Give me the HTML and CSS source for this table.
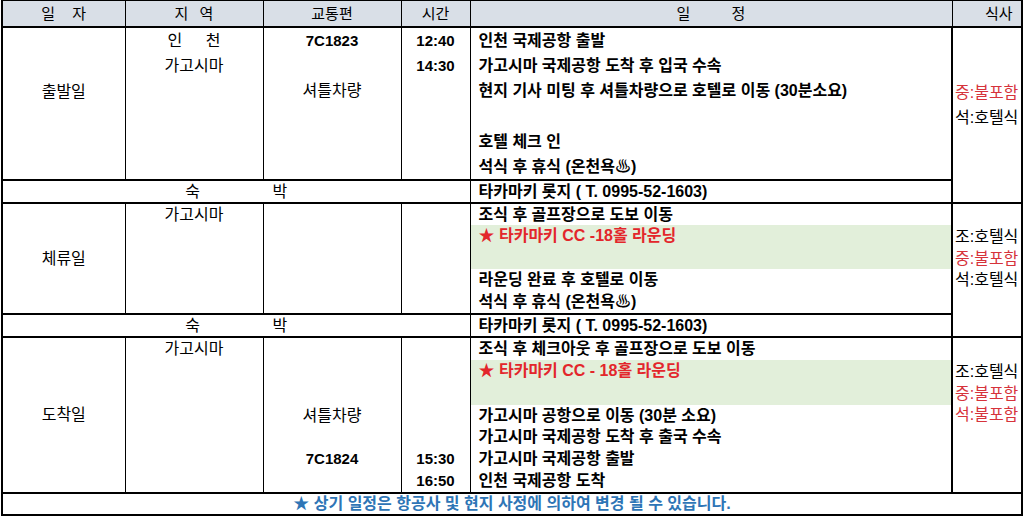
FILE: index.html
```html
<!DOCTYPE html>
<html lang="ko">
<head>
<meta charset="utf-8">
<title>일정표</title>
<link rel="stylesheet" href="styles.css">
</head>
<body>
<table class="plan">
  <colgroup>
    <col class="c-day">
    <col class="c-area">
    <col class="c-trans">
    <col class="c-time">
    <col class="c-sched">
    <col class="c-meal">
  </colgroup>
  <thead>
    <tr class="head">
      <th><span class="sp-day">일 자</span></th>
      <th><span class="sp-area">지 역</span></th>
      <th>교통편</th>
      <th>시간</th>
      <th><span class="sp-sched">일 정</span></th>
      <th class="head-meal">식사</th>
    </tr>
  </thead>
  <tbody>
    <!-- 출발일 -->
    <tr class="h26">
      <td rowspan="6" class="day day-first">출발일</td>
      <td class="area"><span class="sp-city">인 천</span></td>
      <td class="num">7C1823</td>
      <td class="num">12:40</td>
      <td class="sched">인천 국제공항 출발</td>
      <td rowspan="7" class="meal meal-first">
        <div class="meal-line red">중:불포함</div>
        <div class="meal-line">석:호텔식</div>
      </td>
    </tr>
    <tr class="h25">
      <td class="area">가고시마</td>
      <td></td>
      <td class="num">14:30</td>
      <td class="sched">가고시마 국제공항 도착 후 입국 수속</td>
    </tr>
    <tr class="h25">
      <td></td>
      <td class="area">셔틀차량</td>
      <td></td>
      <td class="sched">현지 기사 미팅 후 셔틀차량으로 호텔로 이동 (30분소요)</td>
    </tr>
    <tr class="h26">
      <td></td><td></td><td></td><td class="sched"></td>
    </tr>
    <tr class="h26">
      <td></td><td></td><td></td>
      <td class="sched">호텔 체크 인</td>
    </tr>
    <tr class="h25">
      <td></td><td></td><td></td>
      <td class="sched">석식 후 휴식 (온천욕♨)</td>
    </tr>
    <tr class="stay">
      <td colspan="4" class="stay-label"><span class="sp-stay">숙 박</span></td>
      <td class="sched">타카마키 롯지 ( T. 0995-52-1603)</td>
    </tr>

    <!-- 체류일 -->
    <tr class="h22">
      <td rowspan="4" class="day">체류일</td>
      <td class="area">가고시마</td>
      <td></td><td></td>
      <td class="sched">조식 후 골프장으로 도보 이동</td>
      <td rowspan="5" class="meal meal-mid">
        <div class="meal-line">조:호텔식</div>
        <div class="meal-line red">중:불포함</div>
        <div class="meal-line">석:호텔식</div>
      </td>
    </tr>
    <tr class="h44">
      <td></td><td></td><td></td>
      <td class="sched golf">★ 타카마키 CC -18홀 라운딩</td>
    </tr>
    <tr class="h22">
      <td></td><td></td><td></td>
      <td class="sched">라운딩 완료 후 호텔로 이동</td>
    </tr>
    <tr class="h23">
      <td></td><td></td><td></td>
      <td class="sched">석식 후 휴식 (온천욕♨)</td>
    </tr>
    <tr class="stay">
      <td colspan="4" class="stay-label"><span class="sp-stay">숙 박</span></td>
      <td class="sched">타카마키 롯지 ( T. 0995-52-1603)</td>
    </tr>

    <!-- 도착일 -->
    <tr class="h23">
      <td rowspan="6" class="day">도착일</td>
      <td class="area">가고시마</td>
      <td></td><td></td>
      <td class="sched">조식 후 체크아웃 후 골프장으로 도보 이동</td>
      <td rowspan="6" class="meal meal-last">
        <div class="meal-line">조:호텔식</div>
        <div class="meal-line red">중:불포함</div>
        <div class="meal-line red">석:불포함</div>
      </td>
    </tr>
    <tr class="h45">
      <td></td><td></td><td></td>
      <td class="sched golf">★ 타카마키 CC - 18홀 라운딩</td>
    </tr>
    <tr class="h21">
      <td></td>
      <td class="area">셔틀차량</td>
      <td></td>
      <td class="sched">가고시마 공항으로 이동 (30분 소요)</td>
    </tr>
    <tr class="h22">
      <td></td><td></td><td></td>
      <td class="sched">가고시마 국제공항 도착 후 출국 수속</td>
    </tr>
    <tr class="h22">
      <td></td>
      <td class="num">7C1824</td>
      <td class="num">15:30</td>
      <td class="sched">가고시마 국제공항 출발</td>
    </tr>
    <tr class="h23">
      <td></td><td></td>
      <td class="num">16:50</td>
      <td class="sched">인천 국제공항 도착</td>
    </tr>
    <tr class="foot">
      <td colspan="6">★ 상기 일정은 항공사 및 현지 사정에 의하여 변경 될 수 있습니다.</td>
    </tr>
  </tbody>
</table>
</body>
</html>
```

FILE: styles.css
```css
body {
  margin: 0;
  background: #ffffff;
  font-family: "Liberation Sans", "Noto Sans CJK KR", sans-serif;
}

.plan {
  margin-left: 1px;
  width: 1020px;
  border-collapse: collapse;
  table-layout: fixed;
  border: 2px solid #000;
  border-top: 1px solid #000;
  font-size: 16px;
  line-height: 20px;
  color: #000;
}

.c-day { width: 123px; }
.c-area { width: 138px; }
.c-trans { width: 138px; }
.c-time { width: 69px; }
.c-sched { width: 482px; }
.c-meal { width: 70px; }

.plan th,
.plan td {
  padding: 0;
  border-left: 1px solid #000;
  border-right: 1px solid #000;
  white-space: nowrap;
  overflow: hidden;
  vertical-align: middle;
  text-align: center;
}

.plan .head th {
  height: 25px;
  background: #d9dfe7;
  font-size: 15px;
  font-weight: 400;
  border-bottom: 2px solid #000;
}

.plan .head th.head-meal {
  padding-left: 24px;
}

.sp-day { word-spacing: 13px; }
.sp-area { word-spacing: 7px; }
.sp-sched { word-spacing: 37px; }
.sp-city { word-spacing: 19px; }
.sp-stay { word-spacing: 68px; }

.h21 { height: 21px; }
.h22 { height: 22px; }
.h23 { height: 23px; }
.h25 { height: 25px; }
.h26 { height: 26px; }
.h44 { height: 44px; }
.h45 { height: 45px; }

.plan td.day { font-weight: 400; }
.plan td.day-first { padding-bottom: 24px; }

.plan td.area { font-weight: 400; }
.plan td.num {
  font-size: 15px;
  font-weight: 700;
}

.plan td.sched {
  text-align: left;
  padding-left: 8px;
  font-weight: 700;
}

.plan td.golf {
  vertical-align: top;
  padding-top: 1px;
  background: #e2efda;
  color: #e3262b;
}

.plan .stay td {
  height: 21px;
  border-top: 2px solid #000;
  border-bottom: 2px solid #000;
}

.plan td.stay-label { font-weight: 400; }

.plan td.meal {
  vertical-align: top;
  text-align: left;
  padding-left: 2px;
  border-left: 2px solid #000;
  border-bottom: 2px solid #000;
  font-weight: 400;
}

.plan td.meal-first { padding-top: 52px; }
.meal-first .meal-line { line-height: 25px; }
.plan td.meal-mid { padding-top: 22px; }
.meal-mid .meal-line { line-height: 21.5px; }
.plan td.meal-last { padding-top: 23px; }
.meal-last .meal-line { line-height: 21.5px; }

.red { color: #d6333b; }

.plan .foot td {
  height: 20px;
  border-top: 2px solid #000;
  color: #2e75b6;
  font-weight: 700;
}
```
